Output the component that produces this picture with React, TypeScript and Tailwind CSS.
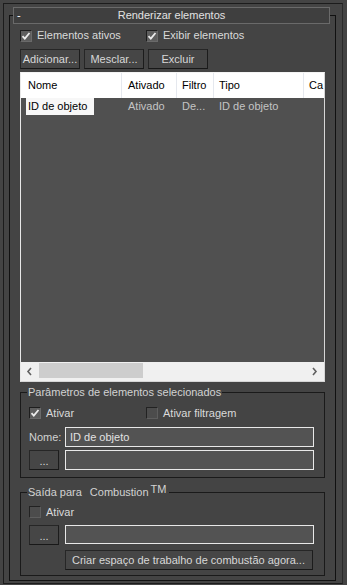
import type { ReactNode } from 'react'

function Check({ on }: { on?: boolean }) {
  return (
    <span
      className={`w-[12px] h-[12px] shrink-0 border flex items-center justify-center ${
        on
          ? 'bg-[#5e5e5e] border-[#1e1e1e] border-b-[#6a6a6a] border-r-[#6a6a6a]'
          : 'bg-[#4c4c4c] border-[#222222] border-b-[#5e5e5e] border-r-[#5e5e5e]'
      }`}
    >
      {on && (
        <svg width="10" height="10" viewBox="0 0 10 10">
          <path d="M1.5 5.2 L3.8 7.6 L8.5 2" fill="none" stroke="#ececec" strokeWidth="1.8" />
        </svg>
      )}
    </span>
  )
}

function CheckLabel({ on, label, w }: { on?: boolean; label: string; w?: string }) {
  return (
    <div className={`flex items-center gap-[5px] ${w ?? ''}`}>
      <Check on={on} />
      <span className="text-[#dadada] leading-none">{label}</span>
    </div>
  )
}

function Btn({ children, className = '' }: { children: ReactNode; className?: string }) {
  return (
    <div
      className={`h-[20px] bg-[#464646] border border-[#262626] border-b-[#181818] border-r-[#1c1c1c] flex items-center text-[#d8d8d8] whitespace-nowrap ${className}`}
    >
      {children}
    </div>
  )
}

function Group({ legend, children, className = '' }: { legend: ReactNode; children: ReactNode; className?: string }) {
  return (
    <div className={`relative w-[305px] ml-[10px] border border-[#1a1a1a] ${className}`}>
      <div className="absolute left-[6px] -top-[8px] bg-[#444444] px-[1px] text-[#d2d2d2] leading-[14px] flex">
        {legend}
      </div>
      {children}
    </div>
  )
}

const cols = [
  { w: 'w-[101px]', pl: 'pl-[7px]', label: 'Nome' },
  { w: 'w-[55px]', pl: 'pl-[6px]', label: 'Ativado' },
  { w: 'w-[37px]', pl: 'pl-[5px]', label: 'Filtro' },
  { w: 'w-[90px]', pl: 'pl-[5px]', label: 'Tipo' },
  { w: 'w-[30px]', pl: 'pl-[5px]', label: 'Ca' },
]

export default function App() {
  return (
    <div
      className="w-[347px] h-[585px] bg-[#444444] p-[3px] text-[11px] overflow-hidden"
      style={{ fontFamily: '"Liberation Sans", Arial, sans-serif' }}
    >
      <div className="w-[340px] h-[581px] border border-[#1c1c1c] border-r-[#2a2a2a]">
        {/* rollout title */}
        <div className="relative z-10 ml-[9px] mt-[3px] w-[317px] h-[17px] bg-[#3f3f3f] border border-[#6a6a6a] grid grid-cols-[20px_1fr_20px] items-center">
          <span className="text-white pl-[3px] leading-none">-</span>
          <span className="text-center text-[#e2e2e2] leading-none">Renderizar elementos</span>
          <span />
        </div>

        <div className="ml-[5px] -mt-[9px] w-[327px] h-[566px] border border-[#111111]">
          <div className="flex items-center h-[13px] mt-[13px] ml-[10px]">
            <CheckLabel on label="Elementos ativos" w="w-[126px]" />
            <CheckLabel on label="Exibir elementos" />
          </div>

          <div className="flex gap-[4px] mt-[7px] ml-[10px]">
            <Btn className="w-[60px] justify-center">Adicionar...</Btn>
            <Btn className="w-[60px] justify-center">Mesclar...</Btn>
            <Btn className="w-[60px] justify-center">Excluir</Btn>
          </div>

          {/* list view */}
          <div className="mt-[3px] ml-[10px] w-[305px] h-[310px] border border-[#d6d6d6] border-l-[#e8e8e8] border-t-[#f4f4f4] bg-[#505050] flex flex-col overflow-hidden">
            <div className="h-[25px] bg-white flex shrink-0">
              {cols.map((c) => (
                <div
                  key={c.label}
                  className={`${c.w} ${c.pl} h-full shrink-0 border-r border-[#e5e8ee] flex items-center text-black whitespace-nowrap overflow-hidden`}
                >
                  {c.label}
                </div>
              ))}
            </div>
            <div className="flex-1">
              <div className="h-[17px] flex items-center">
                <div className="w-[101px] shrink-0">
                  <span className="ml-[5px] pl-[2px] w-[68px] h-[17px] bg-[#f7f7f7] text-black flex items-center">
                    ID de objeto
                  </span>
                </div>
                <div className="w-[55px] pl-[6px] shrink-0 text-[#c4c4c4]">Ativado</div>
                <div className="w-[37px] pl-[5px] shrink-0 text-[#c4c4c4]">De...</div>
                <div className="w-[90px] pl-[5px] shrink-0 text-[#c4c4c4]">ID de objeto</div>
              </div>
            </div>
            <div className="h-[19px] bg-[#f0f0f0] flex items-start shrink-0">
              <svg width="18" height="19" viewBox="0 0 18 19" className="shrink-0">
                <polyline points="10,6 7,9.5 10,13" fill="none" stroke="#606060" strokeWidth="1.6" />
              </svg>
              <div className="w-[104px] h-[15px] mt-[1px] bg-[#cdcdcd]" />
              <div className="flex-1" />
              <svg width="18" height="19" viewBox="0 0 18 19" className="shrink-0">
                <polyline points="7,6 10,9.5 7,13" fill="none" stroke="#606060" strokeWidth="1.6" />
              </svg>
            </div>
          </div>

          <Group legend={<span>Parâmetros de elementos selecionados</span>} className="mt-[10px] h-[86px] pt-[14px] pl-[8px]">
            <div className="flex items-center h-[12px]">
              <CheckLabel on label="Ativar" w="w-[117px]" />
              <CheckLabel label="Ativar filtragem" />
            </div>
            <div className="flex items-center mt-[8px] h-[20px]">
              <span className="w-[36px] text-[#d2d2d2]">Nome:</span>
              <div className="w-[249px] h-[20px] border border-[#e8e8e8] bg-[#535353] text-[#e2e2e2] pl-[4px] flex items-center">
                ID de objeto
              </div>
            </div>
            <div className="flex items-center mt-[3px] h-[20px] gap-[6px]">
              <Btn className="w-[30px] justify-center items-end pb-[2px] text-[#c8c8c8] leading-none">...</Btn>
              <div className="w-[249px] h-[20px] border border-[#e8e8e8] bg-[#535353]" />
            </div>
          </Group>

          <Group
            legend={
              <>
                <span>Saída para</span>
                <span className="ml-[8px]">Combustion</span>
                <span className="ml-[2px] -mt-[3px] pr-[2px]">TM</span>
              </>
            }
            className="mt-[14px] h-[84px] pt-[13px] pl-[8px]"
          >
            <div className="flex items-center h-[12px]">
              <CheckLabel label="Ativar" />
            </div>
            <div className="flex items-center mt-[7px] h-[19px] gap-[6px]">
              <Btn className="w-[30px] h-[19px] justify-center items-end pb-[2px] text-[#c8c8c8] leading-none">...</Btn>
              <div className="w-[249px] h-[19px] border border-[#e8e8e8] bg-[#535353]" />
            </div>
            <Btn className="mt-[6px] ml-[36px] w-[248px] pl-[6px]">Criar espaço de trabalho de combustão agora...</Btn>
          </Group>
        </div>
      </div>
    </div>
  )
}
